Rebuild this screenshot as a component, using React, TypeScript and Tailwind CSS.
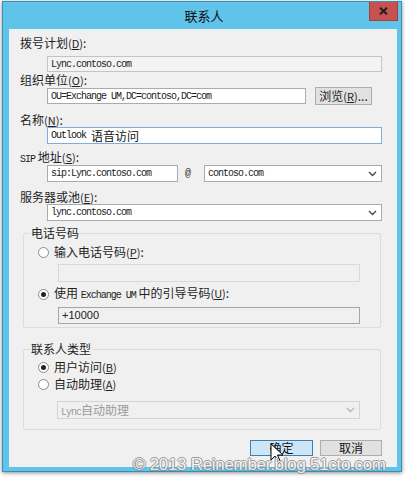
import React from 'react';

const cjk = '[font-family:"Noto_Sans_CJK_SC","Noto_Sans",sans-serif]';
const mono = '[font-family:"Liberation_Mono","Noto_Sans_CJK_SC",monospace]';
const asc = `text-[10px] tracking-[-1px] ${mono}`;

function Key({ k }: { k: string }) {
  return (
    <span className="text-[11px]">
      (<span className="underline">{k}</span>)
    </span>
  );
}

function Label({ text, k, className = '' }: { text: string; k: string; className?: string }) {
  return (
    <div className={`h-[14px] leading-[14px] text-[12px] text-[#1e1e1e] ${className}`}>
      {text}
      <Key k={k} />:
    </div>
  );
}

function Chevron({ muted }: { muted?: boolean }) {
  return (
    <svg width="9" height="6" viewBox="0 0 9 6" className="mr-[4px] shrink-0">
      <path d="M1 1l3.5 3.5L8 1" fill="none" stroke={muted ? '#b5b5b5' : '#444'} strokeWidth="1.3" />
    </svg>
  );
}

function Radio({ checked, children }: { checked?: boolean; children: React.ReactNode }) {
  return (
    <div className="h-[14px] flex items-center">
      <span className="w-[11px] h-[11px] rounded-full border border-[#8c8c8c] bg-white flex items-center justify-center shrink-0">
        {checked && <span className="w-[5px] h-[5px] rounded-full bg-[#222]" />}
      </span>
      <span className="ml-[5px] leading-[14px] text-[12px] text-[#1e1e1e]">{children}</span>
    </div>
  );
}

export default function App() {
  return (
    <div className={`relative w-[408px] h-[480px] bg-white overflow-hidden ${cjk}`}>
      <div className="ml-[2px] mt-[1px] w-[400px] h-[471px] bg-[#5fc3ea] border border-[#3a8db5] shadow-[0_1px_4px_rgba(0,0,0,0.45)] flex flex-col">
        {/* title bar */}
        <div className="relative h-[27px] shrink-0 flex items-center justify-center pl-[4px]">
          <span className="text-[13px] text-[#111] leading-none">联系人</span>
          <div className="absolute top-0 right-[3px] w-[29px] h-[19px] bg-[#c75050] border border-[#a54040] border-t-0 flex items-center justify-center">
            <svg width="9" height="8" viewBox="0 0 9 8">
              <path d="M1 0.8l7 6.4M8 0.8l-7 6.4" stroke="#1d1d1d" strokeWidth="2" />
            </svg>
          </div>
        </div>

        {/* client area */}
        <div className="ml-[6px] mr-[4px] h-[438px] bg-[#f0f0f0] flex flex-col pl-[11px] pr-[15px] pt-[7px]">
          <Label text="拨号计划" k="D" />
          <div className={`mt-[6px] ml-[27px] h-[16px] border border-[#c4c4c4] bg-[#f3f3f3] flex items-center pl-[3px] text-[#222] ${asc}`}>
            Lync.contoso.com
          </div>

          <Label text="组织单位" k="O" className="mt-[1px]" />
          <div className="h-[18px] ml-[27px] flex items-center">
            <div className={`w-[259px] h-[16px] border border-[#ababab] bg-white flex items-center pl-[3px] text-[#222] ${asc}`}>
              OU=Exchange UM,DC=contoso,DC=com
            </div>
            <div className="ml-[9px] w-[57px] h-[18px] bg-[#e1e1e1] border border-[#adadad] flex items-center justify-center text-[12px] text-[#222]">
              浏览<Key k="R" />...
            </div>
          </div>

          <Label text="名称" k="N" className="mt-[8px]" />
          <div className={`ml-[27px] h-[17px] border border-[#7eaedc] bg-white flex items-center pl-[3px] text-[#111] ${asc}`}>
            Outlook&nbsp;<span className={`text-[12px] tracking-normal ${cjk}`}>语音访问</span>
          </div>

          <div className="mt-[6px] h-[14px] leading-[14px] text-[12px] text-[#1e1e1e]">
            <span className={asc}>SIP</span> 地址<Key k="S" />:
          </div>
          <div className="mt-[1px] ml-[27px] h-[17px] flex items-center">
            <div className={`w-[131px] h-[17px] border border-[#ababab] bg-white flex items-center pl-[3px] text-[#222] ${asc}`}>
              sip:Lync.contoso.com
            </div>
            <span className={`ml-[7px] w-[19px] text-[#333] ${asc}`}>@</span>
            <div className={`flex-1 h-[17px] border border-[#ababab] bg-white flex items-center justify-between pl-[3px] text-[#222] ${asc}`}>
              contoso.com
              <Chevron />
            </div>
          </div>

          <Label text="服务器或池" k="E" className="mt-[8px]" />
          <div className={`ml-[27px] h-[17px] border border-[#ababab] bg-white flex items-center justify-between pl-[3px] text-[#222] ${asc}`}>
            lync.contoso.com
            <Chevron />
          </div>

          {/* phone number group */}
          <fieldset className="mt-[5px] ml-[3px] mr-[1px] border border-[#dcdcdc] rounded-[2px]">
            <legend className="ml-[6px] px-[1px] h-[14px] leading-[14px] text-[12px] text-[#1e1e1e]">电话号码</legend>
            <div className="pl-[14px] pr-[20px] pb-[3px] flex flex-col">
              <div className="mt-[5px]">
                <Radio>
                  输入电话号码<Key k="P" />:
                </Radio>
              </div>
              <div className="mt-[5px] ml-[20px] h-[18px] border border-[#d9d9d9] bg-[#f0f0f0]" />
              <div className="mt-[5px]">
                <Radio checked>
                  使用 <span className={asc}>Exchange UM</span> 中的引导号码<Key k="U" />:
                </Radio>
              </div>
              <div className="mt-[6px] ml-[20px] h-[17px] border border-[#a6a6a6] bg-[#f0f0f0] flex items-center pl-[3px] text-[11px] text-[#222] [font-family:'Liberation_Sans',sans-serif]">
                +10000
              </div>
            </div>
          </fieldset>

          {/* contact type group */}
          <fieldset className="mt-[14px] ml-[3px] mr-[1px] border border-[#dcdcdc] rounded-[2px]">
            <legend className="ml-[6px] px-[1px] h-[14px] leading-[14px] text-[12px] text-[#1e1e1e]">联系人类型</legend>
            <div className="pl-[14px] pr-[20px] pb-[10px] flex flex-col">
              <div className="mt-[4px]">
                <Radio checked>
                  用户访问<Key k="B" />
                </Radio>
              </div>
              <div className="mt-[3px]">
                <Radio>
                  自动助理<Key k="A" />
                </Radio>
              </div>
              <div className="mt-[10px] ml-[19px] h-[18px] border border-[#d4d4d4] bg-[#f0f0f0] flex items-center justify-between pl-[3px] text-[12px] text-[#9a9a9a]">
                <span>
                  <span className={asc}>Lync</span>自动助理
                </span>
                <Chevron muted />
              </div>
            </div>
          </fieldset>

          <div className="mt-[10px] flex justify-end gap-[7px]">
            <div className="w-[63px] h-[16px] bg-[#cde6f7] border border-[#3c7fb1] flex items-center justify-center text-[12px] text-[#111]">
              确定
            </div>
            <div className="w-[62px] h-[16px] bg-[#e1e1e1] border border-[#adadad] flex items-center justify-center text-[12px] text-[#111]">
              取消
            </div>
          </div>
        </div>
      </div>

      {/* mouse pointer */}
      <svg className="absolute left-[270px] top-[443px]" width="13" height="21" viewBox="0 0 13 21">
        <path d="M1 1v16l4-4 3 7 2.5-1-3-7H13z" fill="#fff" stroke="#000" strokeWidth="1" strokeLinejoin="round" />
      </svg>

      {/* watermark */}
      <div className="absolute left-[133px] top-[455px] text-[17px] leading-[20px] tracking-[-0.3px] text-[#f6f6f6] opacity-85 [font-family:'Liberation_Sans',Arial,sans-serif] [text-shadow:1px_0_#8a8a8a,-1px_0_#8a8a8a,0_1px_#8a8a8a,0_-1px_#8a8a8a]">
        © 2013 Reinember.blog.51cto.com
      </div>
    </div>
  );
}
